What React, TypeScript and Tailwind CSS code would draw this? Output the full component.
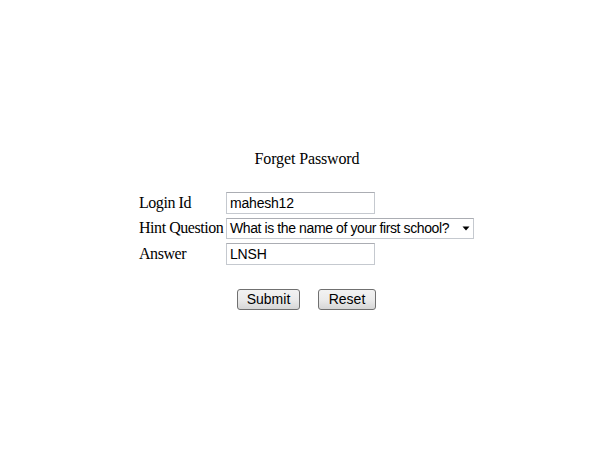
import React from "react";

export default function App() {
  const serif = { fontFamily: '"Liberation Serif", "Times New Roman", serif' };
  const sans = { fontFamily: '"Liberation Sans", Arial, sans-serif' };
  return (
    <div className="w-[614px] h-[460px] bg-white flex flex-col items-center" style={serif}>
      <div className="mt-[150px] text-[16px] leading-[18px] text-black tracking-[-0.13px]">Forget Password</div>
      <div className="mt-[23px] w-[336px] flex flex-col gap-[3px]">
        <div className="flex items-center h-[23px]">
          <div className="w-[87px] text-[16px] text-black tracking-[-0.45px]">Login Id</div>
          <input
            readOnly
            value="mahesh12"
            className="w-[149px] h-[22px] border border-[#c5c9cf] border-t-[#abadb3] px-[3px] text-[14px] text-black outline-none tracking-[-0.2px]"
            style={sans}
          />
        </div>
        <div className="flex items-center h-[22px]">
          <div className="w-[87px] text-[16px] text-black whitespace-nowrap tracking-[-0.45px]">Hint Question</div>
          <div
            className="w-[248px] h-[21px] border border-[#c5c9cf] border-t-[#abadb3] flex items-center justify-between pl-[3px] pr-[3px] text-[14px] text-black"
            style={sans}
          >
            <span className="whitespace-nowrap tracking-[-0.4px]">What is the name of your first school?</span>
            <svg width="8" height="5" viewBox="0 0 8 5" className="shrink-0">
              <path d="M0.5 0.5 L7.5 0.5 L4 4.5 Z" fill="#000" />
            </svg>
          </div>
        </div>
        <div className="flex items-center h-[23px]">
          <div className="w-[87px] text-[16px] text-black tracking-[-0.45px]">Answer</div>
          <input
            readOnly
            value="LNSH"
            className="w-[149px] h-[22px] border border-[#c5c9cf] border-t-[#abadb3] px-[3px] text-[14px] text-black outline-none tracking-[-0.2px]"
            style={sans}
          />
        </div>
      </div>
      <div className="mt-[24px] flex gap-[18px] pr-[1px]" style={sans}>
        <button className="w-[63px] h-[21px] rounded-[3px] border border-[#707070] bg-gradient-to-b from-[#f2f2f2] via-[#ebebeb] to-[#d6d6d6] text-[14px] leading-[19px] text-black">
          Submit
        </button>
        <button className="w-[58px] h-[21px] rounded-[3px] border border-[#707070] bg-gradient-to-b from-[#f2f2f2] via-[#ebebeb] to-[#d6d6d6] text-[14px] leading-[19px] text-black">
          Reset
        </button>
      </div>
    </div>
  );
}
